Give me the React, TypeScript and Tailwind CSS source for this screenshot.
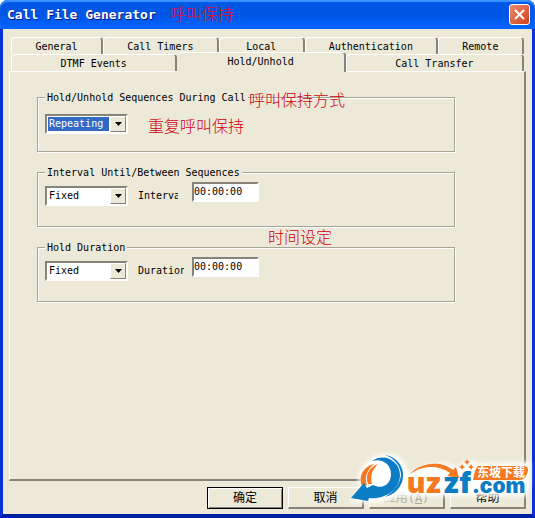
import { ReactNode } from 'react';

const ROW_ONE = [
  { label: 'General', width: 'flex-[92]' },
  { label: 'Call Timers', width: 'flex-[116]' },
  { label: 'Local', width: 'flex-[86]' },
  { label: 'Authentication', width: 'flex-[134]' },
  { label: 'Remote', width: 'flex-[86]' },
];

function Tab({ label, width }: { label: string; width: string }) {
  return (
    <button
      role="tab"
      aria-selected={false}
      className={`${width} h-full rounded-t-sm border-t border-l border-white border-r-2 border-r-[#85837a] whitespace-nowrap`}
    >
      {label}
    </button>
  );
}

function Group({ title, children }: { title: string; children: ReactNode }) {
  return (
    <fieldset className="relative h-[61px] border border-[#a3a498] pl-[7px] shadow-[1px_1px_0_white,inset_1px_1px_0_white]">
      <legend className="h-3 bg-[#ece9d8] px-0.5 leading-[14px]">{title}</legend>
      {children}
    </fieldset>
  );
}

function Combo({ label, options, active }: { label: string; options: string[]; active?: boolean }) {
  return (
    <div className="relative flex h-5 w-[83px] shrink-0 border-2 border-[#85837a] border-r-white border-b-white bg-white p-px">
      <select
        aria-label={label}
        className={`w-[61px] appearance-none pl-px leading-[14px] outline-none ${active ? 'bg-[#316ac5] text-white outline-1 -outline-offset-1 outline-dotted outline-black' : 'bg-white'}`}
      >
        {options.map((o) => (
          <option key={o}>{o}</option>
        ))}
      </select>
      <span className="pointer-events-none absolute inset-y-0 right-0 flex w-4 items-center justify-center border border-white border-r-[#85837a] border-b-[#85837a] bg-[#ece9d8]">
        <svg width="7" height="4" viewBox="0 0 7 4" aria-hidden="true">
          <path d="M0 0h7L3.5 4z" />
        </svg>
      </span>
    </div>
  );
}

function TimeRow({ id, label, caption, captionWidth }: { id: string; label: string; caption: string; captionWidth: string }) {
  return (
    <div className="flex pt-1">
      <div className="pt-1">
        <Combo label={label} options={['Fixed', 'Random']} />
      </div>
      <div className="w-16 pt-2 pl-2.5">
        <label htmlFor={id} className={`${captionWidth} block overflow-hidden leading-3 whitespace-nowrap`}>
          {caption}
        </label>
      </div>
      <input
        id={id}
        defaultValue="00:00:00"
        className="h-5 w-[67px] border-2 border-[#85837a] border-r-white border-b-white bg-white pb-0.5 leading-3 outline-none"
      />
    </div>
  );
}

function DialogButton({ children, primary, disabled }: { children: ReactNode; primary?: boolean; disabled?: boolean }) {
  return (
    <button
      disabled={disabled}
      className={`h-[22px] w-[76px] text-xs ${primary ? 'border border-black shadow-[inset_1px_1px_0_white,inset_-1px_-1px_0_#85837a]' : 'border border-white border-r-2 border-b-2 border-r-[#85837a] border-b-[#85837a]'} ${disabled ? 'text-[#aca899]' : ''}`}
    >
      {children}
    </button>
  );
}

function Watermark() {
  return (
    <svg
      className="pointer-events-none absolute -right-[3px] bottom-0 h-[64px] w-[187px]"
      viewBox="348 450 187 64"
      role="img"
      aria-label="uzzf.com"
    >
      <defs>
        <filter id="glow" x="-10%" y="-20%" width="120%" height="140%">
          <feGaussianBlur stdDeviation="2" />
        </filter>
      </defs>
      <g filter="url(#glow)" fill="white">
        <path d="M350 503L360 490C354 470 370 453 388 454C400 454 407 463 408 474Q440 456 458 468Q468 454 478 464L530 462V482L527 496H406L396 496C388 504 372 502 366 502z" />
      </g>
      {/* swoosh: orange rim, blue ring with a tail to the lower left */}
      <path d="M362 486C358 476 364 466 374 464C367 470 364 477 367 485z" fill="#f47920" />
      <path d="M368 484C365 475 369 467 378 464C372 470 370 476 372 484z" fill="#f47920" />
      <path d="M372 461C384 452 400 461 400 475C400 490 384 500 369 498L368 501L351 498L364 483L367 488L373 485C383 490 391 484 391 474C391 464 382 458 372 461z" fill="#0b7dc5" />
      <path d="M385 455C399 457 406 470 402 482C399 490 393 495 385 497C395 491 401 482 401 474C400 465 394 458 385 455z" fill="#0b7dc5" />
      <path d="M410 474C419 464 439 459 453 470L456 467L459 478L447 476L450 473C437 464 422 466 410 474z" fill="#f47920" />
      <path d="M467 459l1 2 2 1-2 1-1 2-1-2-2-1 2-1zM462 464l1 2 2 1-2 1-1 2-1-2-2-1 2-1zM471 464l1 2 2 1-2 1-1 2-1-2-2-1 2-1z" fill="#f47920" />
      <g fontFamily="Inter, 'Open Sans', sans-serif" fontWeight="900">
        <text x="407" y="493" fontSize="28" fill="#f47920">uz</text>
        <text x="443" y="493" fontSize="28" fill="#0b7dc5">zf</text>
        <text x="472" y="493" fontSize="21" fill="#0b7dc5">.com</text>
      </g>
      <path d="M478 466H524Q530 467 527 474Q525 480 519 480H473Q475 468 478 466z" fill="#f47920" />
      <text x="477" y="477" fontSize="12" fontWeight="700" fontFamily="'Noto Sans CJK SC', sans-serif" fill="white">
        东坡下载
      </text>
    </svg>
  );
}

export default function App() {
  return (
    <div className="relative flex min-h-screen flex-col rounded-t-lg border-x-[3px] border-b-4 border-[#0831d9] border-b-[#001ea0] bg-[#ece9d8] font-['DejaVu_Sans_Mono','Noto_Sans_CJK_SC',monospace] text-[10px] text-black">
      <header className="-mx-[3px] flex h-[29px] items-center rounded-t-lg bg-linear-to-b from-[#0058e6] via-[#0055e5] to-[#0066ff] pr-[5px] pl-[7px] shadow-[inset_0_2px_1px_#3a93ff]">
        <h1 className="text-[13px] font-bold text-white [text-shadow:1px_1px_0_#0a1883]">Call File Generator</h1>
        <span className="ml-3.5 text-base font-light text-[#e01020]">呼叫保持</span>
        <button aria-label="Close" className="ml-auto flex size-[21px] items-center justify-center rounded-[3px] border border-white bg-linear-to-br from-[#e98a6c] to-[#d13d14]">
          <svg width="11" height="11" viewBox="0 0 11 11" stroke="white" strokeWidth="2" aria-hidden="true">
            <path d="M1 1l9 9M10 1l-9 9" />
          </svg>
        </button>
      </header>

      <main className="flex flex-1 flex-col px-1.5 pt-2">
        <div role="tablist" className="px-0.5">
          <div className="flex h-[17px]">
            {ROW_ONE.map((t) => (
              <Tab key={t.label} {...t} />
            ))}
          </div>
          <div className="flex h-[17px] items-end">
            <Tab label="DTMF Events" width="flex-[166]" />
            <button
              role="tab"
              aria-selected
              className="z-10 -mb-px h-5 flex-[169] rounded-t-sm border-t border-r-2 border-white border-r-[#85837a] bg-[#ece9d8] pb-0.5"
            >
              Hold/Unhold
            </button>
            <Tab label="Call Transfer" width="flex-[178]" />
          </div>
        </div>

        <section className="flex flex-1 flex-col gap-3.5 border-t border-r-2 border-b-2 border-l border-white border-r-[#85837a] border-b-[#85837a] pt-[19px] pr-[69px] pl-[27px]">
          <Group title="Hold/Unhold Sequences During Call">
            <div className="pt-[11px]">
              <Combo label="Sequences" options={['Repeating', 'Single']} active />
            </div>
            <span className="absolute -top-3.5 left-[211px] text-base leading-6 font-light text-[#d00010]">呼叫保持方式</span>
            <span className="absolute top-3 left-[110px] text-base leading-6 font-light text-[#d00010]">重复呼叫保持</span>
          </Group>
          <Group title="Interval Until/Between Sequences">
            <TimeRow id="interval" label="Interval type" caption="Interval" captionWidth="w-10" />
            <span className="absolute top-12 left-[230px] text-base leading-6 font-light text-[#d00010]">时间设定</span>
          </Group>
          <Group title="Hold Duration">
            <TimeRow id="duration" label="Duration type" caption="Duration" captionWidth="w-[46px]" />
          </Group>
        </section>

        <footer className="flex justify-end gap-[5px] pt-1.5 pb-[5px]">
          <DialogButton primary>确定</DialogButton>
          <DialogButton>取消</DialogButton>
          <DialogButton disabled>
            应用(<u>A</u>)
          </DialogButton>
          <DialogButton>帮助</DialogButton>
        </footer>
      </main>
      <Watermark />
    </div>
  );
}
